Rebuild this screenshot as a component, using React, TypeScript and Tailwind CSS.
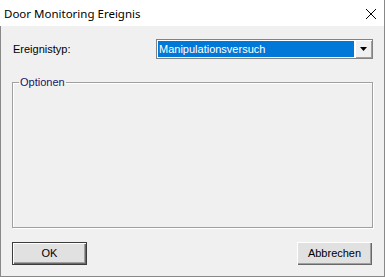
import React from "react";

export default function App() {
  const body = { fontFamily: '"Liberation Sans", Arial, sans-serif' };
  return (
    <div className="w-[385px] h-[277px] flex flex-col bg-[#f0f0f0] text-[11px] text-black overflow-hidden" style={body}>
      <div className="h-[26px] shrink-0 bg-white border-r border-[#888888] flex items-center justify-between pl-[4px] pr-[8px]">
        <span className="text-[11.5px] leading-none text-black mt-[2px]" style={{ fontFamily: '"Noto Sans", "Open Sans", sans-serif' }}>
          Door Monitoring Ereignis
        </span>
        <svg width="12" height="12" viewBox="0 0 12 12" className="mt-[1px] -mr-[1px]">
          <path d="M1 1 L11 11 M11 1 L1 11" stroke="#000" strokeWidth="1" fill="none" />
        </svg>
      </div>
      <div className="flex-1 flex flex-col border-l border-r border-b border-[#888888] px-[11px] pt-[13px]">
        <div className="flex items-center h-[20px]">
          <span className="pl-[1px] w-[144px] leading-none">Ereignistyp:</span>
          <div className="w-[217px] h-[20px] border border-[#828282] bg-white p-[1px] flex">
            <div className="flex-1 bg-[#0078d7] text-white flex items-center pl-[1px] leading-none">
              Manipulationsversuch
            </div>
            <div className="w-[17px] ml-[1px] -my-[1px] -mr-[1px] bg-[#f0f0f0] flex items-center justify-center shadow-[inset_1px_1px_0_#ffffff,inset_-1px_-1px_0_#a0a0a0]">
              <svg width="7" height="4" viewBox="0 0 7 4">
                <path d="M0 0 H7 L3.5 4 Z" fill="#000" />
              </svg>
            </div>
          </div>
        </div>
        <fieldset className="mt-[17px] h-[152px] border border-[#a0a0a0] shadow-[1px_1px_0_#ffffff,inset_1px_1px_0_#ffffff]">
          <legend className="ml-[6px] px-[1px] leading-[13px] text-[#14146e]">Optionen</legend>
        </fieldset>
        <div className="mt-[14px] flex justify-between">
          <button className="w-[75px] h-[23px] bg-[#e1e1e1] border border-[#3c3c3c] shadow-[inset_1px_1px_0_#ffffff,inset_-1px_-1px_0_#696969,inset_-2px_-2px_0_#a0a0a0] flex items-center justify-center leading-none">
            OK
          </button>
          <button className="w-[75px] h-[23px] mr-[1px] bg-[#e1e1e1] shadow-[inset_1px_1px_0_#ffffff,inset_-1px_-1px_0_#696969,inset_-2px_-2px_0_#a0a0a0] flex items-center justify-center leading-none">
            Abbrechen
          </button>
        </div>
      </div>
    </div>
  );
}
